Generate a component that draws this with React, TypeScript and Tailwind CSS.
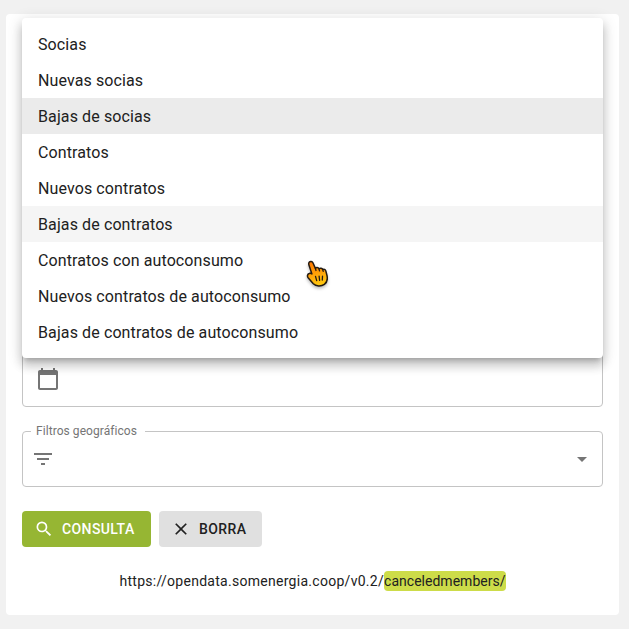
import React from "react";
import { MdCalendarToday, MdFilterList, MdArrowDropDown, MdSearch, MdClose } from "react-icons/md";

const options: { label: string; state: string }[] = [
  { label: "Socias", state: "" },
  { label: "Nuevas socias", state: "" },
  { label: "Bajas de socias", state: "bg-[#ebebeb]" },
  { label: "Contratos", state: "" },
  { label: "Nuevos contratos", state: "" },
  { label: "Bajas de contratos", state: "bg-[#f5f5f5]" },
  { label: "Contratos con autoconsumo", state: "" },
  { label: "Nuevos contratos de autoconsumo", state: "" },
  { label: "Bajas de contratos de autoconsumo", state: "" },
];

function OptionsMenu() {
  return (
    <ul className="absolute top-1 right-4 left-4 rounded bg-white py-2 shadow-[0_5px_5px_-3px_rgba(0,0,0,0.2),0_8px_10px_1px_rgba(0,0,0,0.14),0_3px_14px_2px_rgba(0,0,0,0.12)]">
      {options.map((o) => (
        <li key={o.label} className={`px-4 pt-[7px] pb-[5px] text-base leading-6 tracking-[0.11px] ${o.state}`}>
          {o.label}
        </li>
      ))}
    </ul>
  );
}

function HandPointer() {
  return (
    <svg
      className="absolute top-[259px] left-[305px] drop-shadow-[0_2px_1.5px_rgba(0,0,0,0.25)]"
      width="25"
      height="29"
      viewBox="0 0 25 29"
    >
      <defs>
        <linearGradient id="hand" x1="0" y1="0" x2="0.25" y2="1">
          <stop offset="0.1" stopColor="#ff7a00" />
          <stop offset="1" stopColor="#ffc50f" />
        </linearGradient>
      </defs>
      <path
        d="M4.2 3.2C5.2 1.9 7.2 2.2 7.9 3.8L10.4 9.4C11.3 8.2 13.2 8.3 14 9.8C15.2 8.7 17.1 9 17.7 10.5C18.9 9.8 20.4 10.4 20.8 11.9L22 16.5C22.7 20 21.8 23.7 19.4 25.4C16.3 27.5 11 27.5 8.3 24.8L3.1 18.7C2 17.1 2.4 15.1 4.2 14.5C5.3 14.1 6.2 14.5 6.9 14.9L4 6.3C3.6 5.1 3.6 4.1 4.2 3.2Z"
        fill="url(#hand)"
        stroke="#241b12"
        strokeWidth="1.5"
        strokeLinejoin="round"
      />
      <path
        d="M10.4 9.4L11 11.5M14 9.8L14.5 11.8M17.7 10.5L18.2 12.3M10.5 17.3L11.7 21.7M14.1 17.2L14.6 21.4M17.5 17.2L17.3 21"
        fill="none"
        stroke="#241b12"
        strokeWidth="1.3"
        strokeLinecap="round"
      />
    </svg>
  );
}

export default function App() {
  return (
    <div className="h-[629px] w-[629px] bg-[#f1f1f1] pt-3.5 pr-2.5 pl-1.5 font-[Roboto,sans-serif] text-[#212121]">
      <main className="relative flex h-[601px] flex-col rounded bg-white px-4 pt-[337px]">
        <div className="flex h-14 shrink-0 items-center rounded border border-[#c4c4c4] pl-[13px] text-[#757575]">
          <MdCalendarToday size={24} />
        </div>

        <fieldset className="mt-[17px] h-[63px] shrink-0 rounded border border-[#c4c4c4] pr-2 pl-2 text-[#757575]">
          <legend className="h-[14px] px-[5px] text-xs leading-[14px] tracking-[0.06px]">
            <span className="pr-[3px]">Filtros geográficos</span>
          </legend>
          <div className="flex h-[41px] items-center justify-between">
            <MdFilterList size={24} />
            <MdArrowDropDown size={24} />
          </div>
        </fieldset>

        <div className="mt-6 flex shrink-0 gap-2 text-sm font-medium tracking-[0.4px]">
          <button className="flex h-9 w-[129px] items-center gap-2 rounded bg-[#96b633] pl-3 text-white">
            <MdSearch size={20} />
            CONSULTA
          </button>
          <button className="flex h-9 w-[103px] items-center gap-2 rounded bg-[#e0e0e0] pl-3">
            <MdClose size={20} />
            BORRA
          </button>
        </div>

        <p className="mt-6 shrink-0 text-center text-sm leading-5 tracking-[0.28px]">
          https://opendata.somenergia.coop/v0.2/
          <span className="rounded bg-[#cddc49] py-0.5 tracking-[0.02px]">canceledmembers/</span>
        </p>

        <OptionsMenu />
      </main>
      <HandPointer />
    </div>
  );
}
